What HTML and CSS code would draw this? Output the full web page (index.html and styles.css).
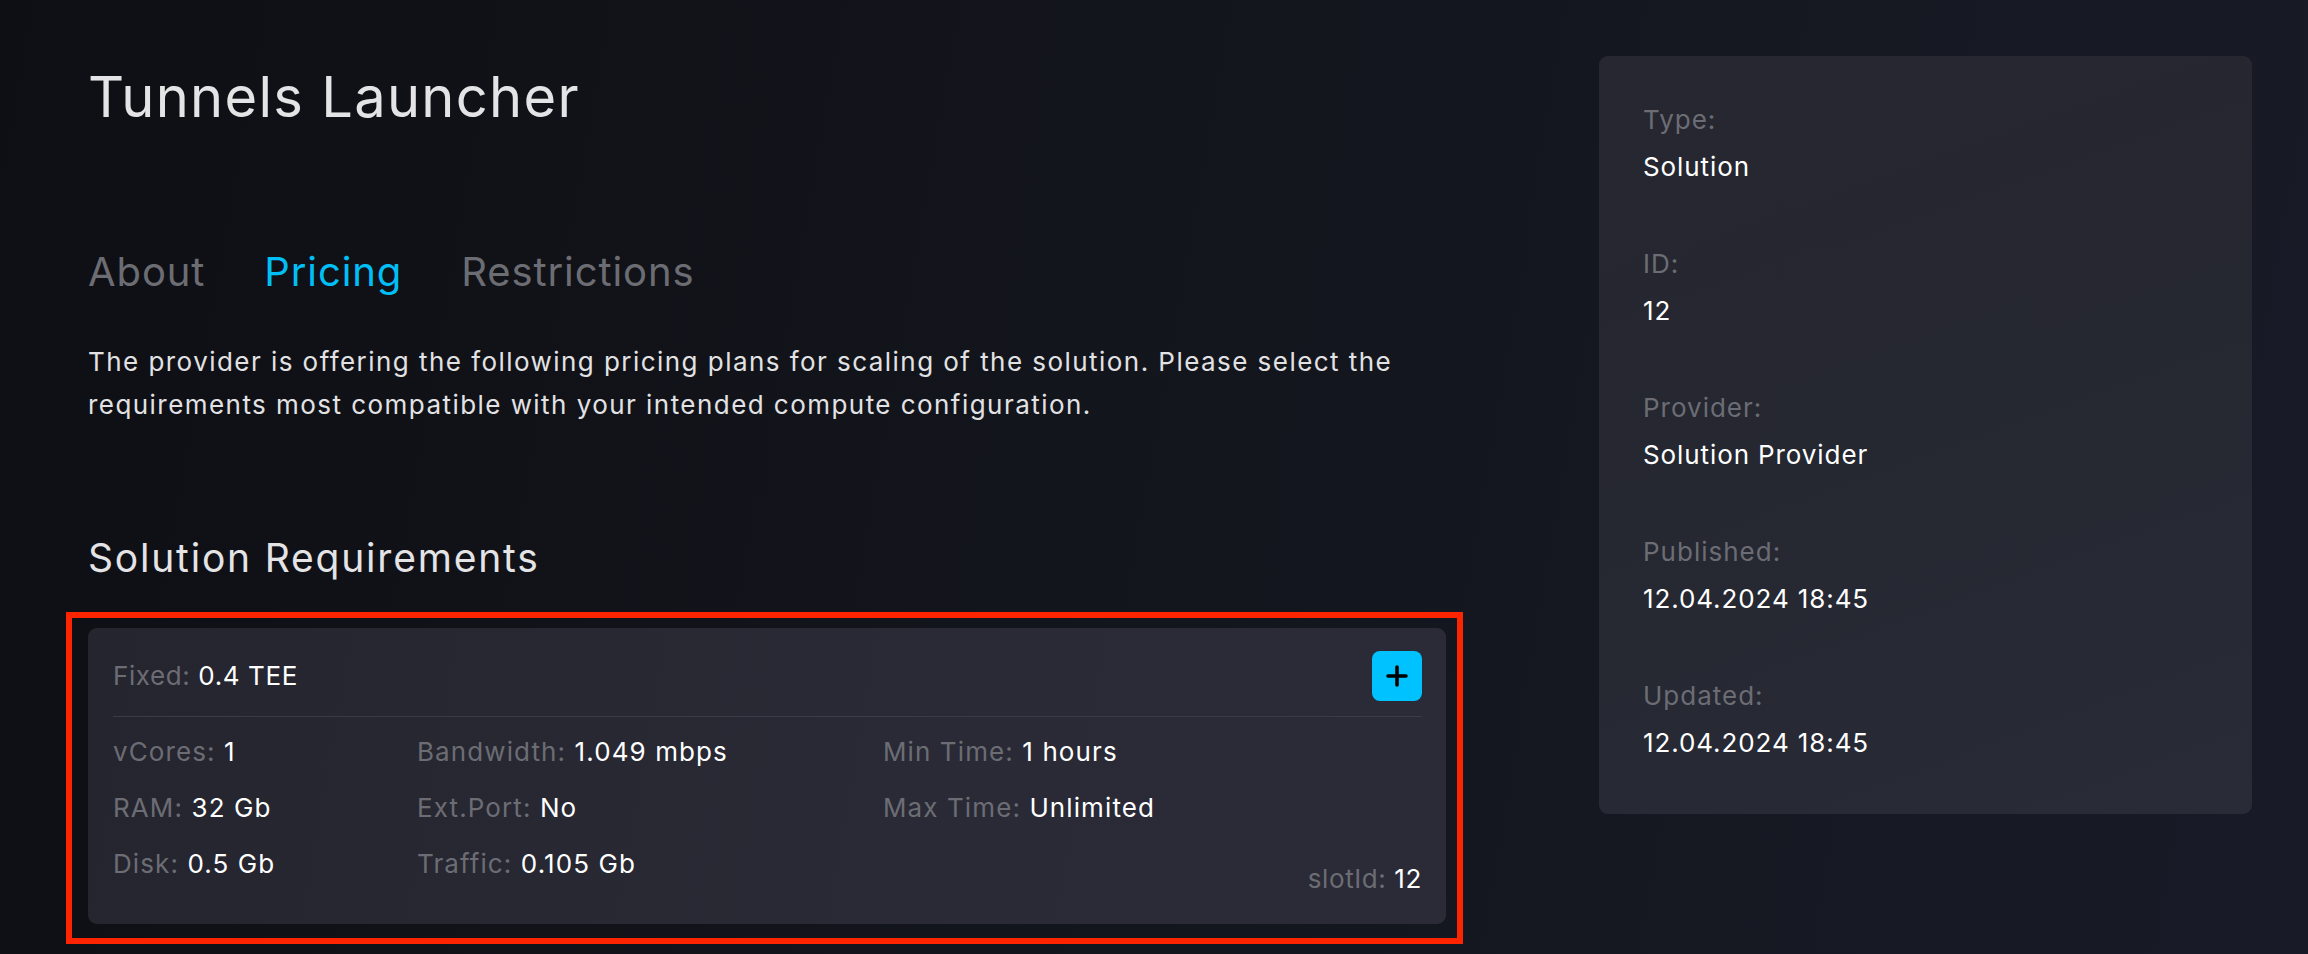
FILE: index.html
```html
<!DOCTYPE html>
<html lang="en">
<head>
<meta charset="utf-8">
<title>Tunnels Launcher</title>
<link rel="stylesheet" href="styles.css">
</head>
<body>
<div class="page">
  <main class="content">
    <h1 class="title">Tunnels Launcher</h1>
    <nav class="tabs">
      <span class="tab">About</span>
      <span class="tab active">Pricing</span>
      <span class="tab">Restrictions</span>
    </nav>
    <p class="intro">The provider is offering the following pricing plans for scaling of the solution. Please select the requirements most compatible with your intended compute configuration.</p>
    <h2 class="section-title">Solution Requirements</h2>
    <div class="highlight">
      <div class="slot-card">
        <div class="slot-head">
          <div class="field"><span class="label">Fixed:</span> <span class="value">0.4 TEE</span></div>
          <button class="add-btn" type="button" aria-label="Add">
            <svg width="22" height="22" viewBox="0 0 22 22"><path d="M11 2v18M2 11h18" stroke="#000" stroke-width="3.6" stroke-linecap="round" fill="none"/></svg>
          </button>
        </div>
        <div class="slot-body">
          <div class="specs">
            <div class="field"><span class="label">vCores:</span> <span class="value">1</span></div>
            <div class="field"><span class="label">Bandwidth:</span> <span class="value">1.049 mbps</span></div>
            <div class="field"><span class="label">Min Time:</span> <span class="value">1 hours</span></div>
            <div class="field"><span class="label">RAM:</span> <span class="value">32 Gb</span></div>
            <div class="field"><span class="label">Ext.Port:</span> <span class="value">No</span></div>
            <div class="field"><span class="label">Max Time:</span> <span class="value">Unlimited</span></div>
            <div class="field"><span class="label">Disk:</span> <span class="value">0.5 Gb</span></div>
            <div class="field"><span class="label">Traffic:</span> <span class="value">0.105 Gb</span></div>
          </div>
          <div class="field slot-id"><span class="label">slotId:</span> <span class="value">12</span></div>
        </div>
      </div>
    </div>
  </main>
  <aside class="info-panel">
    <div class="info-item"><div class="info-label">Type:</div><div class="info-value">Solution</div></div>
    <div class="info-item"><div class="info-label">ID:</div><div class="info-value">12</div></div>
    <div class="info-item"><div class="info-label">Provider:</div><div class="info-value">Solution Provider</div></div>
    <div class="info-item"><div class="info-label">Published:</div><div class="info-value">12.04.2024 18:45</div></div>
    <div class="info-item"><div class="info-label">Updated:</div><div class="info-value">12.04.2024 18:45</div></div>
  </aside>
</div>
</body>
</html>
```

FILE: styles.css
```css
* { box-sizing: border-box; }

html, body {
  margin: 0;
  height: 100%;
}

body {
  background: linear-gradient(100deg, #0e0f14 0%, #13151c 45%, #181a27 100%);
  font-family: Inter, "Noto Sans", sans-serif;
  color: #ffffff;
  overflow: hidden;
}

.page {
  display: flex;
  align-items: flex-start;
  gap: 153px;
  padding: 56px 0 0 88px;
}

.content {
  width: 1358px;
  flex-shrink: 0;
}

.title {
  margin: 8px 0 0;
  font-size: 56px;
  line-height: 66px;
  letter-spacing: 1.3px;
  font-weight: 400;
  color: #e4e4e6;
}

.tabs {
  display: flex;
  gap: 59px;
  margin-top: 119px;
}

.tab {
  font-size: 40px;
  line-height: 46px;
  letter-spacing: 0.9px;
  color: #6c6d73;
}

.tab.active {
  color: #00bff6;
}

.intro {
  margin: 45px 0 0;
  font-size: 26px;
  line-height: 43px;
  letter-spacing: 1.45px;
  color: #e2e2e4;
}

.section-title {
  margin: 110px 0 0;
  font-size: 39px;
  line-height: 44px;
  letter-spacing: 1.8px;
  font-weight: 400;
  color: #e4e4e6;
}

.highlight {
  margin: 32px -17px 0 -22px;
  border: 6px solid #ff2400;
  padding: 10px 11px 14px 16px;
}

.slot-card {
  background: linear-gradient(100deg, #24252e 0%, #292a35 60%, #2a2b36 100%);
  border-radius: 9px;
  padding: 23px 24px 27px 25px;
}

.slot-head {
  display: flex;
  align-items: center;
  justify-content: space-between;
  height: 50px;
}

.field {
  font-size: 26px;
  line-height: 36px;
  letter-spacing: 1.1px;
  white-space: nowrap;
}

.slot-head .field {
  letter-spacing: 0.6px;
}

.label {
  color: #6c6d74;
}

.value {
  color: #ffffff;
}

.add-btn {
  width: 50px;
  height: 50px;
  border: 0;
  border-radius: 8px;
  background: #00c2ff;
  display: flex;
  align-items: center;
  justify-content: center;
  padding: 0;
}

.slot-body {
  border-top: 1px solid #3a3b46;
  margin-top: 15px;
  padding-top: 17px;
  display: flex;
  align-items: flex-end;
  justify-content: space-between;
}

.specs {
  display: grid;
  grid-template-columns: 304px 466px 300px;
  row-gap: 20px;
  margin-bottom: 15px;
}

.slot-id {
  letter-spacing: 0.6px;
}

.info-panel {
  width: 653px;
  flex-shrink: 0;
  background: linear-gradient(160deg, #262730 0%, #252731 50%, #292b37 100%);
  border-radius: 9px;
  padding: 46px 44px 53px;
}

.info-item + .info-item {
  margin-top: 61px;
}

.info-label {
  font-size: 26px;
  line-height: 36px;
  letter-spacing: 1px;
  color: #6c6d74;
}

.info-value {
  margin-top: 11px;
  font-size: 26px;
  line-height: 36px;
  letter-spacing: 0.9px;
  color: #ffffff;
}
```
